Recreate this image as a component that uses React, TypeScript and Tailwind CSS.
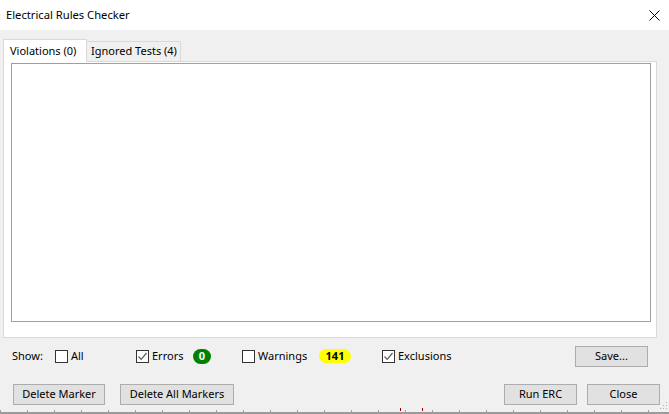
import React from "react";

const font = { fontFamily: '"Noto Sans", sans-serif' };

const Check = ({ checked }: { checked?: boolean }) => (
  <span className="flex h-[13px] w-[13px] shrink-0 items-center justify-center border border-[#333333] bg-white">
    {checked && (
      <svg width="11" height="11" viewBox="0 0 11 11">
        <polyline points="1.5,5.5 4.2,8.3 9.5,2" fill="none" stroke="#5a5a5a" strokeWidth="1.2" />
      </svg>
    )}
  </span>
);

const Btn = ({ label, className }: { label: string; className: string }) => (
  <button
    className={`flex h-[21px] items-center justify-center border border-[#adadad] bg-[#e1e1e1] text-[11px] text-black ${className}`}
  >
    {label}
  </button>
);

const Option = ({ label, checked, className }: { label: string; checked?: boolean; className: string }) => (
  <div className={`flex items-center ${className}`}>
    <Check checked={checked} />
    <span className="ml-[3px]">{label}</span>
  </div>
);

export default function App() {
  return (
    <div
      className="relative flex h-[414px] w-[669px] flex-col overflow-hidden bg-[#f0f0f0] text-[11px] text-black"
      style={font}
    >
      {/* title bar */}
      <div className="flex h-[30px] items-center justify-between bg-white pl-[6px] pr-[9px]">
        <span className="text-[11.2px]">Electrical Rules Checker</span>
        <svg width="11" height="11" viewBox="0 0 11 11">
          <path d="M0.5 0.5 L10.5 10.5 M10.5 0.5 L0.5 10.5" stroke="#000" strokeWidth="1" />
        </svg>
      </div>

      {/* tabs */}
      <div className="mt-[9px] flex h-[22px] items-end pl-[3px]">
        <div className="relative z-10 -mb-px flex h-[23px] w-[84px] items-center whitespace-nowrap border border-b-0 border-[#d9d9d9] bg-white pl-[6px]">
          Violations (0)
        </div>
        <div className="flex h-[20px] w-[94px] items-center whitespace-nowrap border border-b-0 border-l-0 border-[#d9d9d9] bg-[#f0f0f0] pl-[4px]">
          Ignored Tests (4)
        </div>
      </div>

      {/* panel */}
      <div className="ml-[3px] h-[277px] w-[654px] border border-[#d9d9d9] bg-white pl-[7px] pt-px">
        <div className="h-[259px] w-[640px] border border-[#a0a0a0] bg-white" />
      </div>

      {/* show row */}
      <div className="mt-[8px] flex h-[20px] items-center pl-[12px]">
        <span className="w-[43px]">Show:</span>
        <Option label="All" className="w-[81px]" />
        <Option label="Errors" checked className="w-[57px]" />
        <div className="w-[49px]">
          <span className="flex h-[15px] w-[18px] items-center justify-center rounded-full bg-[#008000] text-[11px] font-bold text-white">
            0
          </span>
        </div>
        <Option label="Warnings" className="w-[77px]" />
        <div className="w-[63px]">
          <span className="flex h-[14px] w-[32px] items-center justify-center rounded-full bg-[#ffff00] text-[11px] font-bold text-black">
            141
          </span>
        </div>
        <Option label="Exclusions" checked className="" />
        <Btn label="Save..." className="ml-auto mr-[21px] w-[73px]" />
      </div>

      {/* bottom buttons */}
      <div className="mt-[18px] flex h-[21px] items-center">
        <Btn label="Delete Marker" className="ml-[13px] w-[92px]" />
        <Btn label="Delete All Markers" className="ml-[15px] w-[114px]" />
        <Btn label="Run ERC" className="ml-auto w-[73px]" />
        <Btn label="Close" className="ml-[10px] mr-[9px] w-[73px]" />
      </div>

      {/* window edge behind */}
      <div className="mt-auto flex h-[4px] flex-col">
        <div className="h-[2px] bg-[repeating-linear-gradient(90deg,#a0a0a0_0,#a0a0a0_1px,transparent_1px,transparent_27px)]" />
        <div className="h-[2px] bg-[#9a9a9a]" />
      </div>
      <span className="absolute bottom-[3px] left-[400px] h-[3px] w-px bg-[#8b0000]" />
      <span className="absolute bottom-[3px] left-[422px] h-[3px] w-px bg-[#8b0000]" />

      {/* resize grip */}
      <svg className="absolute bottom-[4px] right-[1px]" width="8" height="8" viewBox="0 0 8 8">
        <rect x="6" y="0" width="1" height="1" fill="#b0b0b0" />
        <rect x="3" y="3" width="1" height="1" fill="#b0b0b0" />
        <rect x="6" y="3" width="1" height="1" fill="#b0b0b0" />
        <rect x="0" y="6" width="1" height="1" fill="#b0b0b0" />
        <rect x="3" y="6" width="1" height="1" fill="#b0b0b0" />
        <rect x="6" y="6" width="1" height="1" fill="#b0b0b0" />
      </svg>
    </div>
  );
}
